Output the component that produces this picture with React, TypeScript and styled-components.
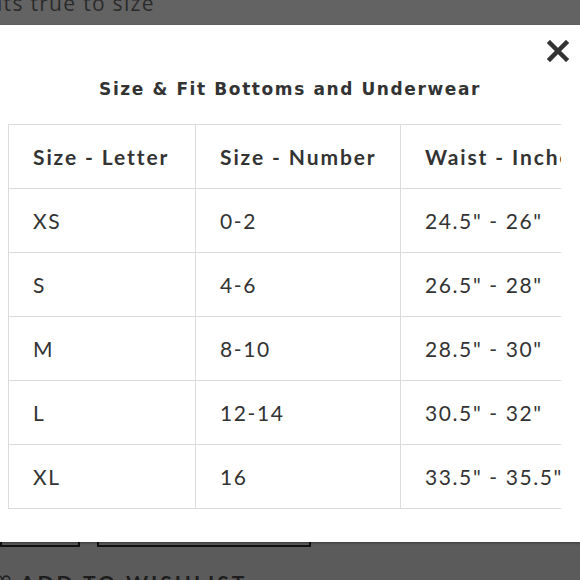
import React from "react";
import styled, { createGlobalStyle } from "styled-components";

const GlobalStyle = createGlobalStyle`
  html, body {
    margin: 0;
    padding: 0;
    background: #606060;
    overflow: hidden;
  }
`;

const Page = styled.div`
  width: 580px;
  height: 580px;
  display: flex;
  flex-direction: column;
  background: linear-gradient(#636363, #5b5b5b);
  overflow: hidden;
`;

const TopStrip = styled.div`
  height: 25px;
  flex-shrink: 0;
  overflow: hidden;
  font-family: "Open Sans", sans-serif;
  font-size: 21px;
  letter-spacing: 1.3px;
  color: #2b2b2b;
  margin-left: -3px;
`;

const TopText = styled.div`
  line-height: 21px;
  margin-top: -7px;
`;

const Modal = styled.div`
  height: 517px;
  flex-shrink: 0;
  background: #fff;
  display: flex;
  flex-direction: column;
  box-shadow: 0 1px 2px rgba(0, 0, 0, 0.4);
  position: relative;
  z-index: 1;
`;

const CloseRow = styled.div`
  display: flex;
  justify-content: flex-end;
  padding: 15px 11px 0 0;
  height: 22px;
`;

const Title = styled.h2`
  margin: 16px 0 0;
  text-align: center;
  font-family: "DejaVu Sans", sans-serif;
  font-weight: 700;
  font-size: 17px;
  letter-spacing: 1.6px;
  color: #333;
  line-height: 22px;
`;

const TableWrap = styled.div`
  margin: 24px 0 0 8px;
  width: 553px;
  overflow: hidden;
`;

const Table = styled.table`
  border-collapse: collapse;
  font-family: "Lato", sans-serif;
  color: #333;
  table-layout: fixed;
  width: 620px;
`;

const Cell = styled.td<{ $head?: boolean }>`
  border: 1px solid #dcdcdc;
  height: 64px;
  padding: 0 0 0 24px;
  font-size: 21px;
  font-weight: ${(p) => (p.$head ? 700 : 400)};
  letter-spacing: ${(p) => (p.$head ? "1.9px" : "1.6px")};
  text-align: left;
  white-space: nowrap;
  overflow: hidden;
  box-sizing: border-box;
`;

const BottomStrip = styled.div`
  flex: 1;
  display: flex;
  flex-direction: column;
`;

const ButtonRow = styled.div`
  display: flex;
  gap: 17px;
`;

const GhostButton = styled.div<{ $w: number }>`
  width: ${(p) => p.$w}px;
  height: 5px;
  border: 2px solid #111;
  border-top: none;
  box-sizing: border-box;
`;

const Wishlist = styled.div`
  margin-top: 25px;
  display: flex;
  align-items: flex-start;
  gap: 5px;
  font-family: "Lato", sans-serif;
  font-weight: 700;
  font-size: 21px;
  letter-spacing: 3px;
  color: #1e1e1e;
  line-height: 21px;
  margin-left: -7px;
`;

const rows = [
  ["XS", "0-2", '24.5" - 26"'],
  ["S", "4-6", '26.5" - 28"'],
  ["M", "8-10", '28.5" - 30"'],
  ["L", "12-14", '30.5" - 32"'],
  ["XL", "16", '33.5" - 35.5"'],
];

function CloseIcon() {
  return (
    <svg width="22" height="22" viewBox="0 0 22 22">
      <path
        d="M3 3 L19 19 M19 3 L3 19"
        stroke="#333"
        strokeWidth="4.5"
        strokeLinecap="square"
      />
    </svg>
  );
}

export default function App() {
  return (
    <>
      <GlobalStyle />
      <Page>
        <TopStrip>
          <TopText>its true to size</TopText>
        </TopStrip>
        <Modal>
          <CloseRow>
            <CloseIcon />
          </CloseRow>
          <Title>Size &amp; Fit Bottoms and Underwear</Title>
          <TableWrap>
            <Table>
              <colgroup>
                <col style={{ width: 187 }} />
                <col style={{ width: 205 }} />
                <col style={{ width: 228 }} />
              </colgroup>
              <thead>
                <tr>
                  <Cell as="th" $head>
                    Size - Letter
                  </Cell>
                  <Cell as="th" $head>
                    Size - Number
                  </Cell>
                  <Cell as="th" $head>
                    Waist - Inches
                  </Cell>
                </tr>
              </thead>
              <tbody>
                {rows.map((r) => (
                  <tr key={r[0]}>
                    {r.map((c, i) => (
                      <Cell key={i}>{c}</Cell>
                    ))}
                  </tr>
                ))}
              </tbody>
            </Table>
          </TableWrap>
        </Modal>
        <BottomStrip>
          <ButtonRow>
            <GhostButton $w={80} />
            <GhostButton $w={214} />
          </ButtonRow>
          <Wishlist>
            <span>♡</span>
            <span>ADD TO WISHLIST</span>
          </Wishlist>
        </BottomStrip>
      </Page>
    </>
  );
}
